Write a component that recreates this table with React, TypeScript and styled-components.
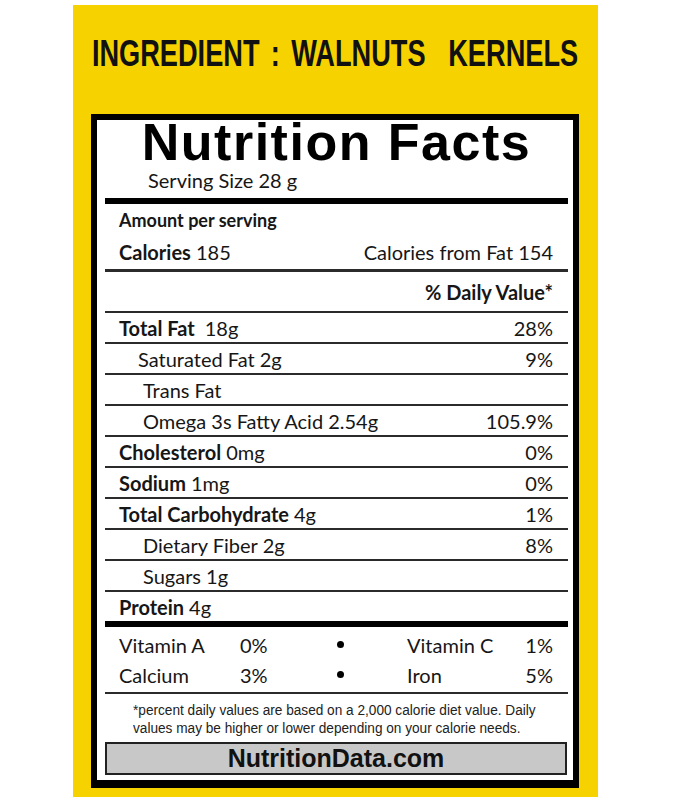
import React from 'react';
import styled, { createGlobalStyle } from 'styled-components';

const YELLOW = '#f6d300';
const INK = '#161616';
const LINE = '#2b2b2b';
const BODY_FONT = `Lato, 'Open Sans', sans-serif`;
const HEAD_FONT = `'Liberation Sans', Arial, sans-serif`;

const GlobalStyle = createGlobalStyle`
  body {
    margin: 0;
    background: #fff;
  }
`;

interface Nutrient {
  name: string;
  amount?: string;
  dv?: string;
  bold?: boolean;
  indent?: number;
  gap?: number;
}

const nutrients: Nutrient[] = [
  { name: 'Total Fat', amount: '18g', dv: '28%', bold: true, gap: 10 },
  { name: 'Saturated Fat', amount: '2g', dv: '9%', indent: 19 },
  { name: 'Trans Fat', indent: 24 },
  { name: 'Omega 3s Fatty Acid', amount: '2.54g', dv: '105.9%', indent: 24 },
  { name: 'Cholesterol', amount: '0mg', dv: '0%', bold: true },
  { name: 'Sodium', amount: '1mg', dv: '0%', bold: true },
  { name: 'Total Carbohydrate', amount: '4g', dv: '1%', bold: true },
  { name: 'Dietary Fiber', amount: '2g', dv: '8%', indent: 24 },
  { name: 'Sugars', amount: '1g', indent: 24 },
  { name: 'Protein', amount: '4g', bold: true },
];

const vitamins = [
  ['Vitamin A', '0%', 'Vitamin C', '1%'],
  ['Calcium', '3%', 'Iron', '5%'],
];

const Page = styled.div`
  padding: 5px 0 0 73px;
`;

const Panel = styled.div`
  width: 525px;
  box-sizing: border-box;
  padding: 0 19px 9px 18px;
  background: ${YELLOW};
`;

const Heading = styled.h1`
  margin: 0;
  height: 109px;
  box-sizing: border-box;
  padding-top: 31px;
  display: flex;
  justify-content: center;
  font-family: ${HEAD_FONT};
  font-weight: 700;
  font-size: 36px;
  line-height: 36px;
  color: #111;
`;

const HeadingText = styled.span`
  display: inline-block;
  white-space: pre;
  word-spacing: 5px;
  transform: scaleX(0.755);
`;

const Label = styled.div`
  border: 6px solid #000;
  border-bottom-width: 8px;
  background: #fff;
  padding: 0 5px 0 8px;
  color: ${INK};
`;

const FactsTitle = styled.h2`
  margin: 0;
  padding-top: 1px;
  text-align: center;
  font-family: ${HEAD_FONT};
  font-weight: 700;
  font-size: 52px;
  line-height: 43px;
  letter-spacing: 1.5px;
  color: #000;
`;

const Serving = styled.div`
  margin: 5px 0 6px;
  padding-left: 43px;
  font-family: ${BODY_FONT};
  font-size: 20px;
  line-height: 23px;
`;

const Rule = styled.div<{ $size: number }>`
  height: ${(p) => p.$size}px;
  background: ${(p) => (p.$size > 3 ? '#000' : LINE)};
`;

const Row = styled.div<{ $height: number; $indent?: number }>`
  height: ${(p) => p.$height}px;
  display: flex;
  align-items: center;
  justify-content: space-between;
  padding: 0 15px 0 ${(p) => 14 + (p.$indent || 0)}px;
  font-family: ${BODY_FONT};
  font-size: 20px;
  white-space: pre;
`;

const SmallBold = styled.span`
  font-size: 18px;
  font-weight: 700;
`;

const Name = styled.span<{ $bold?: boolean }>`
  font-weight: ${(p) => (p.$bold ? 700 : 400)};
`;

const Amount = styled.span<{ $gap?: number }>`
  margin-left: ${(p) => p.$gap ?? 5}px;
`;

const DailyValue = styled.span`
  font-weight: 700;
`;

const VitaminBlock = styled.div`
  padding: 3px 15px 2px 14px;
`;

const VitaminRow = styled.div`
  height: 30px;
  display: grid;
  grid-template-columns: 121px 94px 12px 61px 1fr auto;
  align-items: center;
  font-family: ${BODY_FONT};
  font-size: 20px;
`;

const SecondName = styled.span`
  grid-column: 5;
`;

const Dot = styled.span`
  width: 7px;
  height: 7px;
  border-radius: 50%;
  background: #000;
  justify-self: center;
  margin-top: -2px;
`;

const Footnote = styled.p`
  margin: 0;
  padding: 7px 0 0 28px;
  font-family: ${HEAD_FONT};
  font-size: 15.5px;
  line-height: 18px;
  color: #222;
  white-space: nowrap;
  transform: scaleX(0.88);
  transform-origin: 28px 0;
`;

const SourceBox = styled.div`
  margin: 5px 1px 5px 0;
  height: 33px;
  box-sizing: border-box;
  border: 2px solid #222;
  background: #c8c8c8;
  display: flex;
  align-items: center;
  justify-content: center;
  font-family: ${HEAD_FONT};
  font-weight: 700;
  font-size: 25px;
  color: #111;
`;

const App: React.FC = () => {
  return (
    <>
      <GlobalStyle />
      <Page>
        <Panel>
          <Heading>
            <HeadingText>INGREDIENT : WALNUTS  KERNELS</HeadingText>
          </Heading>
          <Label>
            <FactsTitle>Nutrition Facts</FactsTitle>
            <Serving>Serving Size 28 g</Serving>
            <Rule $size={6} />
            <Row $height={31}>
              <SmallBold>Amount per serving</SmallBold>
            </Row>
            <Row $height={34}>
              <span>
                <Name $bold>Calories</Name> 185
              </span>
              <span>Calories from Fat 154</span>
            </Row>
            <Rule $size={3} />
            <Row $height={39}>
              <span />
              <DailyValue>% Daily Value*</DailyValue>
            </Row>
            <Rule $size={2} />
            {nutrients.map((n, i) => (
              <React.Fragment key={n.name}>
                {i > 0 && <Rule $size={2} />}
                <Row $height={29} $indent={n.indent}>
                  <span>
                    <Name $bold={n.bold}>{n.name}</Name>
                    {n.amount && <Amount $gap={n.gap}>{n.amount}</Amount>}
                  </span>
                  <span>{n.dv}</span>
                </Row>
              </React.Fragment>
            ))}
            <Rule $size={6} />
            <VitaminBlock>
              {vitamins.map(([a, ap, b, bp]) => (
                <VitaminRow key={a}>
                  <span>{a}</span>
                  <span>{ap}</span>
                  <Dot />
                  <SecondName>{b}</SecondName>
                  <span>{bp}</span>
                </VitaminRow>
              ))}
            </VitaminBlock>
            <Rule $size={2} />
            <Footnote>
              *percent daily values are based on a 2,000 calorie diet value. Daily
              <br />
              values may be higher or lower depending on your calorie needs.
            </Footnote>
            <SourceBox>NutritionData.com</SourceBox>
          </Label>
        </Panel>
      </Page>
    </>
  );
};

export default App;
